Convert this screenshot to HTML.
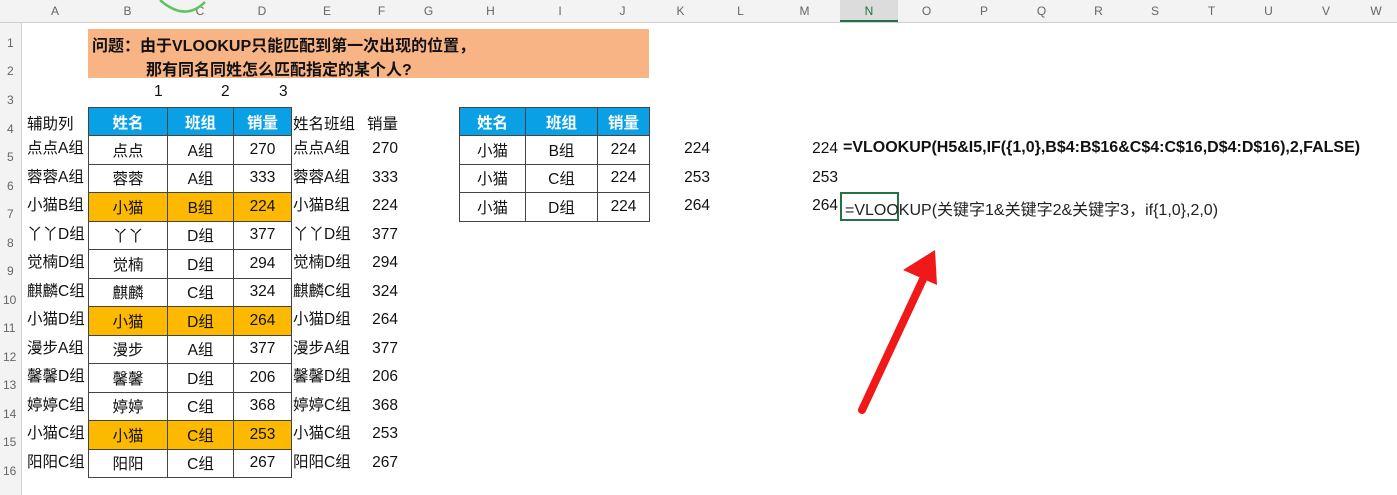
<!DOCTYPE html>
<html><head><meta charset="utf-8"><style>
*{margin:0;padding:0;box-sizing:border-box}
body{width:1397px;height:495px;overflow:hidden;background:#fff;position:relative;font-family:"Liberation Sans","Noto Sans CJK SC",sans-serif;font-size:15.5px;color:#111}
.a{position:absolute;white-space:nowrap}
.hdr{position:absolute;top:0;left:0;width:1397px;height:23px;background:#f3f3f3;border-bottom:1px solid #cfcfcf}
.ch{position:absolute;top:4px;font-size:12px;color:#666;text-align:center}
.rh{position:absolute;left:0;width:22px;background:#f3f3f3;border-right:1px solid #d4d4d4;font-size:12px;color:#666;text-align:center}
table{position:absolute;border-collapse:collapse}
td{border:1px solid #444;text-align:center;height:28.5px;padding:0;font-size:15.5px}
th{background:#0aa0e6;color:#fff;border:1px solid #444;height:28px;font-weight:bold;font-size:15.5px}
.y td{background:#fdb900}
</style></head><body>
<div class="hdr"></div>
<div class="ch" style="left:22px;width:66px">A</div>
<div class="ch" style="left:88px;width:79px">B</div>
<div class="ch" style="left:167px;width:66px">C</div>
<div class="ch" style="left:233px;width:58px">D</div>
<div class="ch" style="left:291px;width:72px">E</div>
<div class="ch" style="left:363px;width:37px">F</div>
<div class="ch" style="left:400px;width:57px">G</div>
<div class="ch" style="left:457px;width:67px">H</div>
<div class="ch" style="left:524px;width:72px">I</div>
<div class="ch" style="left:596px;width:53px">J</div>
<div class="ch" style="left:649px;width:63px">K</div>
<div class="ch" style="left:712px;width:57px">L</div>
<div class="ch" style="left:769px;width:71px">M</div>
<div class="ch" style="left:840px;width:58px;background:#dcdcdc;top:0;height:22px;padding-top:4px;color:#217346;border-bottom:2px solid #217346">N</div>
<div class="ch" style="left:898px;width:57px">O</div>
<div class="ch" style="left:955px;width:58px">P</div>
<div class="ch" style="left:1013px;width:57px">Q</div>
<div class="ch" style="left:1070px;width:57px">R</div>
<div class="ch" style="left:1127px;width:56px">S</div>
<div class="ch" style="left:1183px;width:57px">T</div>
<div class="ch" style="left:1240px;width:57px">U</div>
<div class="ch" style="left:1297px;width:58px">V</div>
<div class="ch" style="left:1355px;width:42px">W</div>
<svg class="a" style="left:150px;top:0" width="70" height="20"><path d="M160 0 Q185 22 205 2" transform="translate(-150,0)" fill="none" stroke="#5ec45e" stroke-width="2.5"/></svg>
<div class="rh" style="top:23px;height:472px"></div>
<div class="a" style="left:7px;top:36px;font-size:12px;color:#666">1</div>
<div class="a" style="left:7px;top:64px;font-size:12px;color:#666">2</div>
<div class="a" style="left:7px;top:93px;font-size:12px;color:#666">3</div>
<div class="a" style="left:7px;top:122px;font-size:12px;color:#666">4</div>
<div class="a" style="left:7px;top:150px;font-size:12px;color:#666">5</div>
<div class="a" style="left:7px;top:179px;font-size:12px;color:#666">6</div>
<div class="a" style="left:7px;top:207px;font-size:12px;color:#666">7</div>
<div class="a" style="left:7px;top:236px;font-size:12px;color:#666">8</div>
<div class="a" style="left:7px;top:264px;font-size:12px;color:#666">9</div>
<div class="a" style="left:3px;top:293px;font-size:12px;color:#666">10</div>
<div class="a" style="left:3px;top:321px;font-size:12px;color:#666">11</div>
<div class="a" style="left:3px;top:350px;font-size:12px;color:#666">12</div>
<div class="a" style="left:3px;top:378px;font-size:12px;color:#666">13</div>
<div class="a" style="left:3px;top:407px;font-size:12px;color:#666">14</div>
<div class="a" style="left:3px;top:435px;font-size:12px;color:#666">15</div>
<div class="a" style="left:3px;top:464px;font-size:12px;color:#666">16</div>
<div class="a" style="left:88px;top:29px;width:561px;height:49px;background:#f9b486"></div>
<div class="a" style="left:92px;top:32px;font-weight:bold;font-size:16px">问题：由于VLOOKUP只能匹配到第一次出现的位置，</div>
<div class="a" style="left:146px;top:56px;font-weight:bold;font-size:16px">那有同名同姓怎么匹配指定的某个人?</div>
<div class="a" style="left:154px;top:83px">1</div>
<div class="a" style="left:221px;top:83px">2</div>
<div class="a" style="left:279px;top:83px">3</div>
<div class="a" style="left:27px;top:112px">辅助列</div>
<div class="a" style="left:293px;top:112px">姓名班组</div>
<div class="a" style="left:367px;top:112px">销量</div>
<table style="left:88px;top:107px;width:204px">
<tr><th style="width:79px">姓名</th><th style="width:66px">班组</th><th>销量</th></tr>
<tr><td>点点</td><td>A组</td><td>270</td></tr>
<tr><td>蓉蓉</td><td>A组</td><td>333</td></tr>
<tr class="y"><td>小猫</td><td>B组</td><td>224</td></tr>
<tr><td>丫丫</td><td>D组</td><td>377</td></tr>
<tr><td>觉楠</td><td>D组</td><td>294</td></tr>
<tr><td>麒麟</td><td>C组</td><td>324</td></tr>
<tr class="y"><td>小猫</td><td>D组</td><td>264</td></tr>
<tr><td>漫步</td><td>A组</td><td>377</td></tr>
<tr><td>馨馨</td><td>D组</td><td>206</td></tr>
<tr><td>婷婷</td><td>C组</td><td>368</td></tr>
<tr class="y"><td>小猫</td><td>C组</td><td>253</td></tr>
<tr><td>阳阳</td><td>C组</td><td>267</td></tr>
</table>
<div class="a" style="left:27px;top:135px;line-height:28.5px">点点A组<br>蓉蓉A组<br>小猫B组<br>丫丫D组<br>觉楠D组<br>麒麟C组<br>小猫D组<br>漫步A组<br>馨馨D组<br>婷婷C组<br>小猫C组<br>阳阳C组</div>
<div class="a" style="left:293px;top:135px;line-height:28.5px">点点A组<br>蓉蓉A组<br>小猫B组<br>丫丫D组<br>觉楠D组<br>麒麟C组<br>小猫D组<br>漫步A组<br>馨馨D组<br>婷婷C组<br>小猫C组<br>阳阳C组</div>
<div class="a" style="left:368px;top:135px;line-height:28.5px;text-align:right;width:30px">270<br>333<br>224<br>377<br>294<br>324<br>264<br>377<br>206<br>368<br>253<br>267</div>
<table style="left:459px;top:107px;width:191px">
<tr><th style="width:66px">姓名</th><th style="width:72px">班组</th><th>销量</th></tr>
<tr><td>小猫</td><td>B组</td><td>224</td></tr>
<tr><td>小猫</td><td>C组</td><td>224</td></tr>
<tr><td>小猫</td><td>D组</td><td>224</td></tr>
</table>
<div class="a" style="left:670px;top:135px;line-height:28.5px;text-align:right;width:40px">224<br>253<br>264</div>
<div class="a" style="left:798px;top:135px;line-height:28.5px;text-align:right;width:40px">224<br>253<br>264</div>
<div class="a" style="left:843px;top:139px;font-weight:bold;font-size:16px">=VLOOKUP(H5&amp;I5,IF({1,0},B$4:B$16&amp;C$4:C$16,D$4:D$16),2,FALSE)</div>
<div class="a" style="left:840px;top:192px;width:59px;height:29px;border:2px solid #217346"></div>
<div class="a" style="left:845px;top:196px;font-size:16px;color:#222">=VLOOKUP(关键字1&amp;关键字2&amp;关键字3，if{1,0},2,0)</div>
<svg class="a" style="left:840px;top:240px" width="120" height="190"><line x1="22" y1="170" x2="85" y2="35" stroke="#f01818" stroke-width="8" stroke-linecap="round"/><polygon points="95,10 63,30 97,45" fill="#f01818"/></svg>
</body></html>
